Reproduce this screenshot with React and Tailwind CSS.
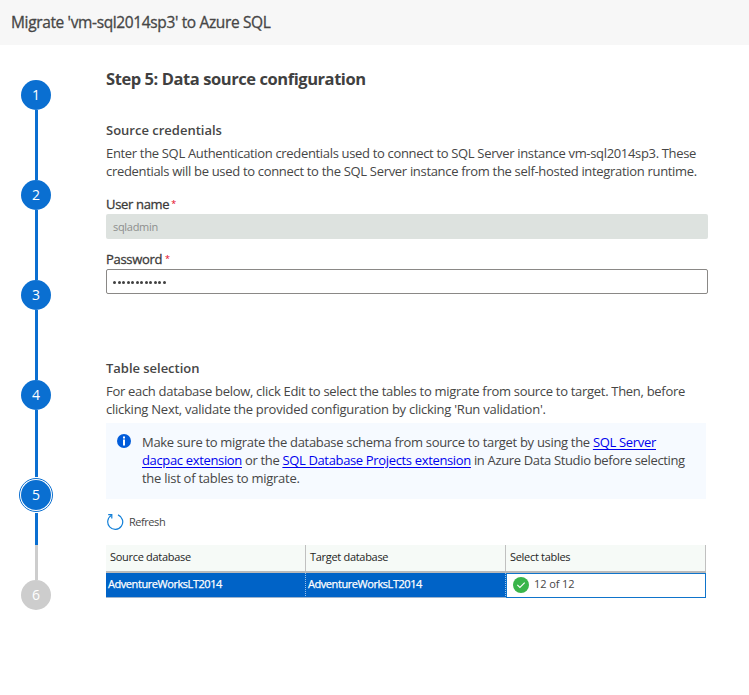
const steps = [1, 2, 3, 4, 5, 6];

function Step({ n }) {
  const last = n === 6;
  const current = n === 5;
  return (
    <li className="flex w-[34px] flex-col items-center">
      <div
        className={
          "flex h-[30px] w-[30px] shrink-0 items-center justify-center rounded-full text-[14px] leading-none text-white " +
          (last ? "bg-[#cdcdcd]" : "bg-[#0a6fd1]") +
          (current ? " ring-1 ring-white outline-[1.5px] outline-offset-1 outline-[#0a6fd1]" : "")
        }
      >
        {n}
      </div>
      {!last && (
        <div className={"ml-px flex h-[70px] w-[3px] flex-col " + (current ? "pt-[3px]" : n === 4 ? "pb-[3px]" : "")}>
          <div className={current ? "h-8 bg-[#0a6fd1]" : "flex-1 bg-[#0a6fd1]"} />
          {current && <div className="flex-1 bg-[#cdcdcd]" />}
        </div>
      )}
    </li>
  );
}

function Link({ children }) {
  return (
    <a href="#" className="text-[#0000ee] underline underline-offset-2">
      {children}
    </a>
  );
}

function Label({ children, gap }) {
  return (
    <div className="flex h-[18px] items-center text-[13px] leading-[18px] tracking-[-0.32px] text-[#3b3a39]">
      <span className="[-webkit-text-stroke:0.3px_#3b3a39]">{children}</span>
      <span className={"text-[9px] text-[#e3001b] " + gap}>*</span>
    </div>
  );
}

function SourceCell({ children }) {
  return (
    <div className="flex h-[25px] items-center border-b border-r border-b-[#9fb4cc] border-r-white/60 bg-[#0063c7] pb-[2px] pl-[2px] tracking-[-0.44px] text-white [-webkit-text-stroke:0.25px_white] [border-right-style:dotted]">
      {children}
    </div>
  );
}

export default function App() {
  return (
    <div className="h-[695px] w-[749px] overflow-hidden bg-white font-['Open_Sans','Noto_Sans',sans-serif] text-[#464646]">
      <header className="flex h-[45px] items-center bg-[#f7f7f7] pb-[2px] pl-[11px]">
        <h1 className="whitespace-nowrap text-[15.5px] leading-5 tracking-[-0.36px] [-webkit-text-stroke:0.3px_#464646]">Migrate &#39;vm-sql2014sp3&#39; to Azure SQL</h1>
      </header>
      <div className="flex">
        <ol className="ml-[19px] mt-[35px] w-[34px] shrink-0">
          {steps.map((n) => (
            <Step key={n} n={n} />
          ))}
        </ol>
        <main className="ml-[53px] w-[602px] whitespace-nowrap pt-[22px]">
          <h2 className="text-[16.5px] font-bold leading-6 tracking-[-0.43px] text-[#404040]">Step 5: Data source configuration</h2>
          <h3 className="mt-[30px] text-[13px] font-semibold leading-[18px] tracking-[0px]">Source credentials</h3>
          <div className="mt-[5px] text-[13px] leading-[18px]">
            <p className="tracking-[-0.33px]">Enter the SQL Authentication credentials used to connect to SQL Server instance vm-sql2014sp3. These</p>
            <p className="tracking-[-0.315px]">credentials will be used to connect to the SQL Server instance from the self-hosted integration runtime.</p>
          </div>
          <div className="mt-[15px]">
            <Label gap="ml-[2px]">User name</Label>
          </div>
          <div className="mt-[1px] flex h-[25px] items-center rounded-[2px] bg-[#dde2df] pl-[7px] pt-[2px] text-[11px] tracking-[-0.3px] text-[#8d8f8e]">sqladmin</div>
          <div className="mt-[11px]">
            <Label gap="ml-[3px]">Password</Label>
          </div>
          <div className="mt-[1px] flex h-[25px] items-center gap-[1.5px] rounded-[2px] border border-[#8a8886] pl-[6px] pt-[1px]">
            {Array.from({ length: 12 }, (_, i) => (
              <span key={i} className="h-[3px] w-[3px] rounded-full bg-[#404040]" />
            ))}
          </div>
          <h3 className="mt-[65px] text-[13px] font-semibold leading-[18px] tracking-[-0.03px]">Table selection</h3>
          <div className="mt-[5px] text-[13px] leading-[18px]">
            <p className="tracking-[-0.3px]">For each database below, click Edit to select the tables to migrate from source to target. Then, before</p>
            <p className="tracking-[-0.25px]">clicking Next, validate the provided configuration by clicking &#39;Run validation&#39;.</p>
          </div>
          <div className="mt-[5px] flex h-[76px] w-[600px] bg-[#f6faff] pl-[11px] pt-[10px]">
            <svg width="14" height="14" viewBox="0 0 14 14" className="mt-[1px] shrink-0">
              <circle cx="7" cy="7" r="7" fill="#015cda" />
              <path d="M6 2.5h2v2H6zM6 5.5h2v6H6z" fill="#fff" />
            </svg>
            <div className="ml-[11px] text-[13px] leading-[18px]">
              <p className="tracking-[-0.315px]">
                Make sure to migrate the database schema from source to target by using the <Link>SQL Server</Link>
              </p>
              <p className="tracking-[-0.345px]">
                <Link>dacpac extension</Link> or the <Link>SQL Database Projects extension</Link> in Azure Data Studio before selecting
              </p>
              <p className="tracking-[-0.27px]">the list of tables to migrate.</p>
            </div>
          </div>
          <div className="mt-[14px] flex h-[18px] items-center text-[11px] tracking-[-0.45px]">
            <svg width="18" height="18" viewBox="0 0 18 18" fill="none" stroke="#1480d8" strokeWidth="1.2" className="shrink-0">
              <path d="M12 1.9A7.5 7.5 0 1 1 5.6 2.3" />
              <path d="M2.2 1.6h3.6v3.8" />
            </svg>
            <span className="ml-[5px]">Refresh</span>
          </div>
          <div className="mt-[14px] grid w-[600px] grid-cols-3 text-[11px]">
            {["Source database", "Target database", "Select tables"].map((h) => (
              <div key={h} className="h-[26px] border-r border-[#c0c0c0] bg-[#f6faf7] pl-1 leading-6 tracking-[-0.3px] text-[#1f1f1f]">
                {h}
              </div>
            ))}
            <div className="col-span-3 h-[2px] bg-[#bababa]" />
            <SourceCell>AdventureWorksLT2014</SourceCell>
            <SourceCell>AdventureWorksLT2014</SourceCell>
            <div className="flex h-[25px] items-center border border-[#0f74cb] pb-px pl-[6px]">
              <svg width="16" height="16" viewBox="0 0 16 16" className="shrink-0">
                <circle cx="8" cy="8" r="8" fill="#39b54a" />
                <path d="M4.3 7.8l2.6 2.6 4.8-4.8" fill="none" stroke="#fff" strokeWidth="1.1" />
              </svg>
              <span className="ml-[5px] pb-[1px] tracking-[-0.1px]">12 of 12</span>
            </div>
          </div>
        </main>
      </div>
    </div>
  );
}
